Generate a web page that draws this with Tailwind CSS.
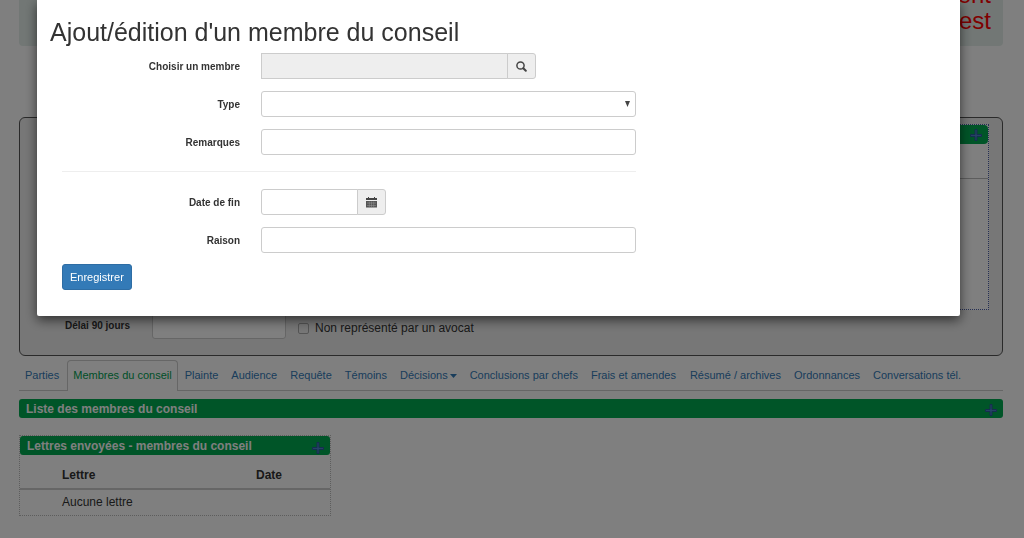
<!DOCTYPE html>
<html lang="fr">
<head>
<meta charset="utf-8">
<meta name="viewport" content="width=device-width, initial-scale=1">
<title>Membres du conseil</title>
<script src="https://cdn.jsdelivr.net/npm/@tailwindcss/browser@4"></script>
</head>
<body class="bg-white font-['Liberation_Sans',Arial,sans-serif] text-xs text-[#333]">
<svg class="hidden" aria-hidden="true">
  <symbol id="plus" viewBox="0 0 12 12">
    <path d="M5 .5h2v5h4.500v2h-4.500v4h-2v-4h-4.500v-2h4.500z" fill="#4a86c8" stroke="#2a5c9e"/>
  </symbol>
</svg>

<main class="pl-[19px] pr-[21px]">
  <header class="flex h-[46px] flex-col justify-end rounded-b bg-[#e4efeb] pr-3 pb-3 text-right text-2xl leading-[26px] text-[#f00]">
    <p>ent</p>
    <p>est</p>
  </header>

  <section class="mt-[71px] rounded-md border border-[#555] bg-[#eee] pt-1.5 pb-4">
    <div class="mr-[13px] ml-6 h-[186px] border border-dotted border-[#4a5fa8] bg-white">
      <div class="flex h-[19px] items-center justify-end rounded bg-[#00aa50] pr-1.5">
        <button type="button" aria-label="Ajouter"><svg class="block size-3"><use href="#plus"/></svg></button>
      </div>
      <div class="h-[35px] border-b border-[#bbb]"></div>
    </div>
    <div class="mt-[3px] flex items-center">
      <label for="delai" class="ml-[45px] w-[87px] text-[10px] font-bold">Délai 90 jours</label>
      <input id="delai" type="text" class="h-[26px] w-[134px] rounded-[3px] border border-[#ccc] bg-white px-2">
      <input id="avocat" type="checkbox" class="mt-1 ml-3 size-[11px] appearance-none rounded-[2px] border border-[#aaa] bg-[#eee]">
      <label for="avocat" class="mt-1 ml-1.5">Non représenté par un avocat</label>
    </div>
  </section>

  <nav class="mt-1 flex border-b border-[#ccc] text-[11px] leading-4 text-[#337ab7]">
    <a href="#" class="mr-0.5 px-1.5 py-[7px]">Parties</a>
    <a href="#" class="-mb-px mr-px rounded-t border border-b-0 border-[#ccc] bg-white px-[5px] py-1.5 text-[#00a050]">Membres du conseil</a>
    <a href="#" class="mr-px px-1.5 py-[7px]">Plainte</a>
    <a href="#" class="mr-px px-1.5 py-[7px]">Audience</a>
    <a href="#" class="mr-px px-1.5 py-[7px]">Requête</a>
    <a href="#" class="mr-px px-1.5 py-[7px]">Témoins</a>
    <a href="#" class="mr-px flex items-center gap-0.5 px-1.5 py-[7px]">Décisions<svg class="mt-0.5 h-[4px] w-[7px]" viewBox="0 0 7 4" fill="currentColor"><path d="M0 0h7L3.500 4z"/></svg></a>
    <a href="#" class="mr-px px-1.5 py-[7px]">Conclusions par chefs</a>
    <a href="#" class="mr-0.5 px-1.5 py-[7px]">Frais et amendes</a>
    <a href="#" class="mr-px px-1.5 py-[7px]">Résumé / archives</a>
    <a href="#" class="mr-px px-1.5 py-[7px]">Ordonnances</a>
    <a href="#" class="px-1.5 py-[7px]">Conversations tél.</a>
  </nav>

  <div class="mt-2 flex h-[19px] items-center justify-between rounded-[3px] bg-[#00aa50] pr-1.5 pl-[7px] text-white">
    <h2 class="font-bold">Liste des membres du conseil</h2>
    <button type="button" aria-label="Ajouter un membre"><svg class="mt-0.5 block size-3"><use href="#plus"/></svg></button>
  </div>

  <section class="mt-[17px] w-[312px] border border-dotted border-[#bbb]">
    <div class="flex h-[19px] items-center justify-between rounded-[3px] bg-[#00aa50] pr-1.5 pl-[7px] text-white">
      <h2 class="font-bold">Lettres envoyées - membres du conseil</h2>
      <button type="button" aria-label="Ajouter une lettre"><svg class="mt-1 block size-3"><use href="#plus"/></svg></button>
    </div>
    <table class="w-full text-left">
      <thead>
        <tr class="border-b-2 border-[#ccc]">
          <th class="w-[236px] pt-3 pb-1 pl-[42px] leading-[17px]">Lettre</th>
          <th class="pt-3 pb-1 leading-[17px]">Date</th>
        </tr>
      </thead>
      <tbody>
        <tr><td colspan="2" class="py-1 pl-[42px] leading-[17px]">Aucune lettre</td></tr>
      </tbody>
    </table>
  </section>
</main>

<!-- Modal -->
<div class="fixed inset-0 bg-black/50">
  <div role="dialog" aria-modal="true" aria-labelledby="titre" class="mr-16 ml-[37px] rounded-b-[2px] bg-white px-[13px] pt-4 pb-[26px] shadow-[0_4px_12px_rgba(0,0,0,0.6)]">
    <h1 id="titre" class="text-[25px] leading-8">Ajout/édition d'un membre du conseil</h1>
    <form class="mt-[5px] ml-3 max-w-[574px]">
      <div class="grid grid-cols-[178px_1fr] items-center gap-x-[21px] gap-y-3">
        <label for="membre" class="pt-px text-right text-[10px] font-bold">Choisir un membre</label>
        <div class="flex w-[275px]">
          <input id="membre" type="text" readonly class="h-[26px] min-w-0 flex-1 border border-[#ccc] bg-[#eee] px-2">
          <button type="button" aria-label="Rechercher" class="-ml-px flex h-[26px] w-[29px] items-center justify-center rounded-r-[3px] border border-[#ccc] bg-[#eee]">
            <svg class="size-[11px]" viewBox="0 0 11 11" fill="none" stroke="#444"><circle cx="4.500" cy="4.500" r="3.600" stroke-width="1.500"/><path d="M7.300 7.300l2.500 2.500" stroke-width="2" stroke-linecap="round"/></svg>
          </button>
        </div>
        <label for="type" class="pt-px text-right text-[10px] font-bold">Type</label>
        <div class="relative">
          <select id="type" class="block h-[26px] w-full appearance-none rounded-[3px] border border-[#ccc] bg-white px-2"><option></option></select>
          <svg class="pointer-events-none absolute top-[10px] right-1.5 h-[6px] w-[5px]" viewBox="0 0 5 6" fill="#444"><path d="M0 0h5L2.500 6z"/></svg>
        </div>
        <label for="remarques" class="pt-px text-right text-[10px] font-bold">Remarques</label>
        <input id="remarques" type="text" class="h-[26px] w-full rounded-[3px] border border-[#ccc] bg-white px-2">
      </div>
      <hr class="mt-4 mb-[17px] border-[#eee]">
      <div class="grid grid-cols-[178px_1fr] items-center gap-x-[21px] gap-y-3">
        <label for="fin" class="pt-px text-right text-[10px] font-bold">Date de fin</label>
        <div class="flex w-[125px]">
          <input id="fin" type="text" class="h-[26px] min-w-0 flex-1 rounded-l-[3px] border border-[#ccc] bg-white px-2">
          <button type="button" aria-label="Choisir une date" class="-ml-px flex h-[26px] w-[29px] items-center justify-center rounded-r-[3px] border border-[#ccc] bg-[#eee]">
            <svg class="h-[11px] w-[11px]" viewBox="0 0 11 11"><path d="M0 1h2V0h1v1h5V0h1v1h2v2H0z" fill="#444"/><path d="M0 4h11v6.500H0z" fill="#555"/><path d="M1 6h9M1 8.500h9M3.300 4.500v6M5.500 4.500v6M7.700 4.500v6" stroke="#999" stroke-width=".5"/></svg>
          </button>
        </div>
        <label for="raison" class="pt-px text-right text-[10px] font-bold">Raison</label>
        <input id="raison" type="text" class="h-[26px] w-full rounded-[3px] border border-[#ccc] bg-white px-2">
      </div>
      <button type="submit" class="mt-[11px] block h-[26px] rounded-[3px] border border-[#2e6da4] bg-[#337ab7] px-[7px] text-[11px] text-white">Enregistrer</button>
    </form>
  </div>
</div>
</body>
</html>
